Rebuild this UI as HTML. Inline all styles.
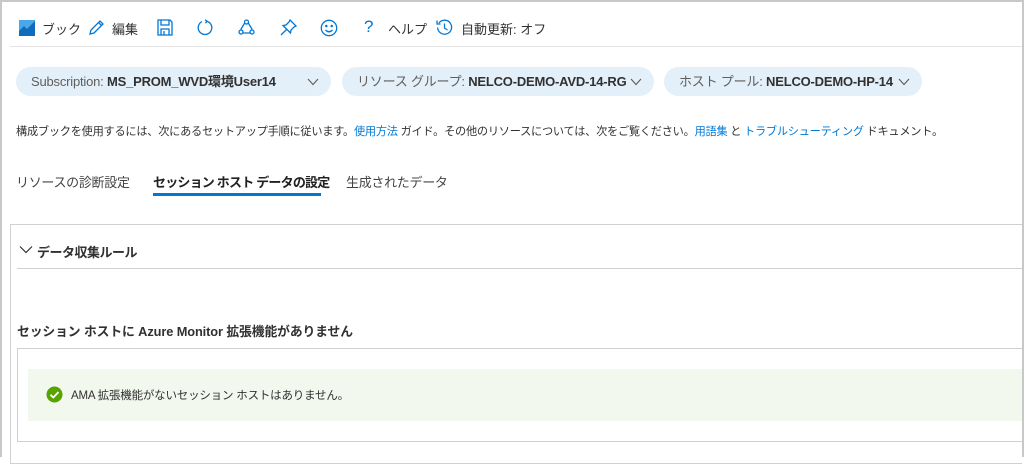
<!DOCTYPE html>
<html><head><meta charset="utf-8"><style>
*{margin:0;padding:0;box-sizing:border-box}
body{width:1024px;height:457px;overflow:hidden;background:#fff;font-family:"Liberation Sans","Noto Sans CJK JP",sans-serif;color:#323130;position:relative}
.frame{position:absolute;left:0;top:0;width:1024px;height:457px;border:2px solid #c8c8c8;border-bottom:none}
.a{position:absolute;white-space:nowrap}
.t{font-size:13px;top:19px}
svg{position:absolute}
.pill{position:absolute;top:67px;height:29px;border-radius:15px;background:#e3eff9;font-size:13px;letter-spacing:-0.2px;line-height:29px;padding-left:15px;color:#605e5c;white-space:nowrap}
.pill b{color:#323130;font-weight:600}
.pill svg{position:absolute;right:12px;top:11px}
.link{color:#0078d4}
</style></head><body>
<div class="frame"></div>
<svg style="left:19px;top:20px" width="16" height="16" viewBox="0 0 16 16"><rect width="16" height="16" fill="#4aa8e8"/><path d="M0 16 L0 11 L5 6 L8 9 L16 1 L16 16Z" fill="#0f6cbd"/></svg>
<div class="a t" style="left:42px">ブック</div>
<svg style="left:88px;top:19px" width="17" height="17" viewBox="0 0 17 17" fill="none" stroke="#0078d4" stroke-width="1.3"><path d="M2 15 L3 11 L12 2 L15 5 L6 14 Z M10.5 3.5 L13.5 6.5"/></svg>
<div class="a t" style="left:112px">編集</div>
<svg style="left:157px;top:19px" width="16" height="17" viewBox="0 0 16 17" fill="none" stroke="#0078d4" stroke-width="1.3"><path d="M1 1 H13 L15 3 V16 H1 Z M4 1 V6 H12 V1 M4 16 V10 H12 V16 M7 12 V16"/></svg>
<svg style="left:197px;top:19px" width="17" height="17" viewBox="0 0 17 17" fill="none" stroke="#0078d4" stroke-width="1.3"><path d="M10 2.2 A6.8 6.8 0 1 1 5 2.6 M10 2.2 L8 0.8 M10 2.2 L8.5 4.2"/></svg>
<svg style="left:238px;top:19px" width="17" height="17" viewBox="0 0 17 17" fill="none" stroke="#0078d4" stroke-width="1.3"><circle cx="8.5" cy="3" r="2"/><circle cx="3" cy="13" r="2"/><circle cx="14" cy="13" r="2"/><path d="M6.7 4 L2.8 10.5 M10.3 4 L14.2 10.5 M5 14 H12"/></svg>
<svg style="left:280px;top:19px" width="17" height="17" viewBox="0 0 17 17" fill="none" stroke="#0078d4" stroke-width="1.3"><path d="M10 1 L16 7 L14 8 L11 11 L10.5 14 L3 6.5 L6 6 L9 3 Z M6.5 10.5 L1 16"/></svg>
<svg style="left:320px;top:19px" width="18" height="18" viewBox="0 0 18 18" fill="none" stroke="#0078d4" stroke-width="1.3"><circle cx="9" cy="9" r="7.7"/><circle cx="6.3" cy="7" r=".6" fill="#0078d4"/><circle cx="11.7" cy="7" r=".6" fill="#0078d4"/><path d="M5.5 11 Q9 14.5 12.5 11"/></svg>
<div class="a t" style="left:364px;color:#0078d4;font-size:17px;top:17px">?</div>
<div class="a t" style="left:388px">ヘルプ</div>
<svg style="left:436px;top:19px" width="17" height="17" viewBox="0 0 17 17" fill="none" stroke="#0078d4" stroke-width="1.3"><path d="M3 4 A7 7 0 1 1 1.6 8.5 M1 1.5 V5 H4.5 M8.5 4.5 V9 L11.5 11"/></svg>
<div class="a t" style="left:461px">自動更新: オフ</div>
<div class="a" style="left:10px;top:46px;width:1012px;height:1px;background:#e5e5e5"></div>

<div class="pill" style="left:16px;width:315px">Subscription: <b>MS_PROM_WVD環境User14</b><svg width="12" height="8" viewBox="0 0 12 8" fill="none" stroke="#605e5c" stroke-width="1.1"><path d="M1 1 L6 6.5 L11 1"/></svg></div>
<div class="pill" style="left:342px;width:312px">リソース グループ: <b>NELCO-DEMO-AVD-14-RG</b><svg width="12" height="8" viewBox="0 0 12 8" fill="none" stroke="#605e5c" stroke-width="1.1"><path d="M1 1 L6 6.5 L11 1"/></svg></div>
<div class="pill" style="left:664px;width:258px">ホスト プール: <b>NELCO-DEMO-HP-14</b><svg width="12" height="8" viewBox="0 0 12 8" fill="none" stroke="#605e5c" stroke-width="1.1"><path d="M1 1 L6 6.5 L11 1"/></svg></div>

<div class="a" style="left:16px;top:123px;font-size:11.2px;letter-spacing:-0.25px">構成ブックを使用するには、次にあるセットアップ手順に従います。<span class="link">使用方法</span> ガイド。その他のリソースについては、次をご覧ください。<span class="link">用語集</span> と <span class="link">トラブルシューティング</span> ドキュメント。</div>

<div class="a" style="left:16px;top:172px;font-size:13px;color:#444;letter-spacing:-0.3px">リソースの診断設定</div>
<div class="a" style="left:153px;top:172px;font-size:13px;font-weight:bold;color:#222;letter-spacing:-0.8px">セッション ホスト データの設定</div>
<div class="a" style="left:153px;top:193px;width:168px;height:3px;background:#0078d4"></div>
<div class="a" style="left:346px;top:172px;font-size:13px;color:#444;letter-spacing:-0.3px">生成されたデータ</div>

<div class="a" style="left:10px;top:224px;width:1012px;height:240px;border:1px solid #d0d0d0;border-right:none"></div>
<svg style="left:19px;top:245px" width="14" height="10" viewBox="0 0 14 10" fill="none" stroke="#323130" stroke-width="1.2"><path d="M1 1.5 L7 7.5 L13 1.5"/></svg>
<div class="a" style="left:37px;top:242px;font-size:13px;font-weight:bold;letter-spacing:-0.5px">データ収集ルール</div>
<div class="a" style="left:17px;top:268px;width:1005px;height:1px;background:#d0d0d0"></div>
<div class="a" style="left:17px;top:321px;font-size:12.8px;font-weight:bold;letter-spacing:-0.1px">セッション ホストに Azure Monitor 拡張機能がありません</div>
<div class="a" style="left:17px;top:348px;width:1005px;height:94px;border:1px solid #d0d0d0;border-right:none"></div>
<div class="a" style="left:28px;top:369px;width:994px;height:52px;background:#f2f8ee"></div>
<svg style="left:46px;top:386px" width="17" height="17" viewBox="0 0 17 17"><circle cx="8.5" cy="8.5" r="8" fill="#57a300"/><path d="M4.5 8.8 L7.3 11.5 L12.5 6" fill="none" stroke="#fff" stroke-width="1.8"/></svg>
<div class="a" style="left:71px;top:387px;font-size:11.5px;letter-spacing:-0.2px">AMA 拡張機能がないセッション ホストはありません。</div>
</body></html>
